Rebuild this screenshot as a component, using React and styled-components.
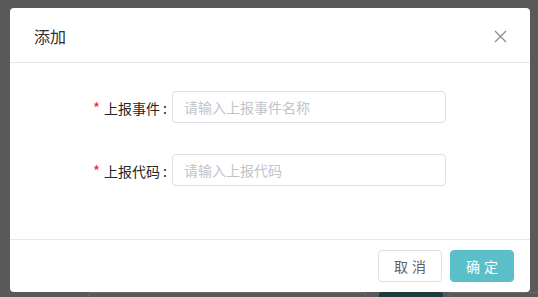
import styled, {createGlobalStyle} from "styled-components";

const GlobalStyle = createGlobalStyle`
  html, body {
    margin: 0;
    padding: 0;
    background: #595959;
    font-family: "Noto Sans CJK SC", "Liberation Sans", sans-serif;
  }
`

const Page = styled.div`
  position: relative;
  width: 538px;
  height: 297px;
  overflow: hidden;
  background: #595959;
  padding: 8px 0 0 10px;
  box-sizing: border-box;
`

const Underlay = styled.div`
  position: absolute;
  left: 0;
  top: 292px;
  width: 100%;
  height: 10px;
`

const GhostBox = styled.div`
  position: absolute;
  top: 0;
  height: 10px;
  left: ${({$left}) => $left}px;
  width: ${({$width}) => $width}px;
  border: 1px solid #6a6a6a;
  border-radius: 3px;
  background: ${({$fill}) => $fill || 'transparent'};
  ${({$fill}) => $fill && 'border-color: transparent;'}
`

const Dialog = styled.div`
  position: relative;
  width: 520px;
  height: 284px;
  background: #ffffff;
  border-radius: 4px;
  display: flex;
  flex-direction: column;
  box-sizing: border-box;
`

const Header = styled.div`
  height: 54px;
  display: flex;
  align-items: center;
  justify-content: space-between;
  padding: 0 22px 0 24px;
  border-bottom: 1px solid #e8e8e8;
  box-sizing: content-box;
`

const Title = styled.div`
  font-size: 16px;
  color: #303133;
  line-height: 20px;
  margin-top: 2px;
`

const CloseButton = styled.button`
  width: 16px;
  height: 16px;
  padding: 0;
  margin-top: 2px;
  border: 0;
  background: transparent;
  display: flex;
  align-items: center;
  justify-content: center;
  cursor: pointer;
`

const Body = styled.div`
  flex: 1;
  padding: 28px 0 0 0;
  display: flex;
  flex-direction: column;
  gap: 31px;
`

const FormRow = styled.div`
  display: flex;
  align-items: center;
  height: 32px;
`

const Label = styled.label`
  width: 162px;
  padding-right: 5px;
  box-sizing: border-box;
  text-align: right;
  font-size: 14px;
  color: #262626;
  white-space: nowrap;
`

const Required = styled.span`
  color: #f5222d;
  margin-right: 4px;
  font-size: 15px;
`

const Colon = styled.span`
  padding-left: 3px;
`

const Input = styled.input`
  width: 274px;
  height: 32px;
  box-sizing: border-box;
  border: 1px solid #dcdfe6;
  border-radius: 4px;
  padding: 0 11px;
  font-size: 14px;
  font-family: "Noto Sans CJK SC", "Liberation Sans", sans-serif;
  color: #606266;
  outline: 0;

  &::placeholder {
    color: #c0c4cc;
  }
`

const Footer = styled.div`
  border-top: 1px solid #e8e8e8;
  height: 52px;
  display: flex;
  align-items: center;
  justify-content: flex-end;
  gap: 8px;
  padding: 0 16px;
`

const Button = styled.button`
  width: 64px;
  height: 32px;
  border-radius: 4px;
  font-size: 14px;
  font-family: "Noto Sans CJK SC", "Liberation Sans", sans-serif;
  letter-spacing: 4px;
  text-indent: 4px;
  cursor: pointer;
  border: 1px solid ${({$primary}) => $primary ? '#5bbfca' : '#dcdfe6'};
  background: ${({$primary}) => $primary ? '#5bbfca' : '#ffffff'};
  color: ${({$primary}) => $primary ? '#ffffff' : '#606266'};
`

export default function App() {
    return <>
        <GlobalStyle/>
        <Page>
            <Underlay>
                <GhostBox $left={88} $width={276}/>
                <GhostBox $left={379} $width={62} $fill="#1f3b3e"/>
                <GhostBox $left={449} $width={100}/>
            </Underlay>
            <Dialog>
                <Header>
                    <Title>添加</Title>
                    <CloseButton aria-label="close">
                        <svg width="13" height="13" viewBox="0 0 13 13">
                            <path d="M1 1 L12 12 M12 1 L1 12" stroke="#8c8c8c" strokeWidth="1.3" fill="none"/>
                        </svg>
                    </CloseButton>
                </Header>
                <Body>
                    <FormRow>
                        <Label><Required>*</Required>上报事件<Colon>:</Colon></Label>
                        <Input placeholder="请输入上报事件名称"/>
                    </FormRow>
                    <FormRow>
                        <Label><Required>*</Required>上报代码<Colon>:</Colon></Label>
                        <Input placeholder="请输入上报代码"/>
                    </FormRow>
                </Body>
                <Footer>
                    <Button>取消</Button>
                    <Button $primary>确定</Button>
                </Footer>
            </Dialog>
        </Page>
    </>
}
